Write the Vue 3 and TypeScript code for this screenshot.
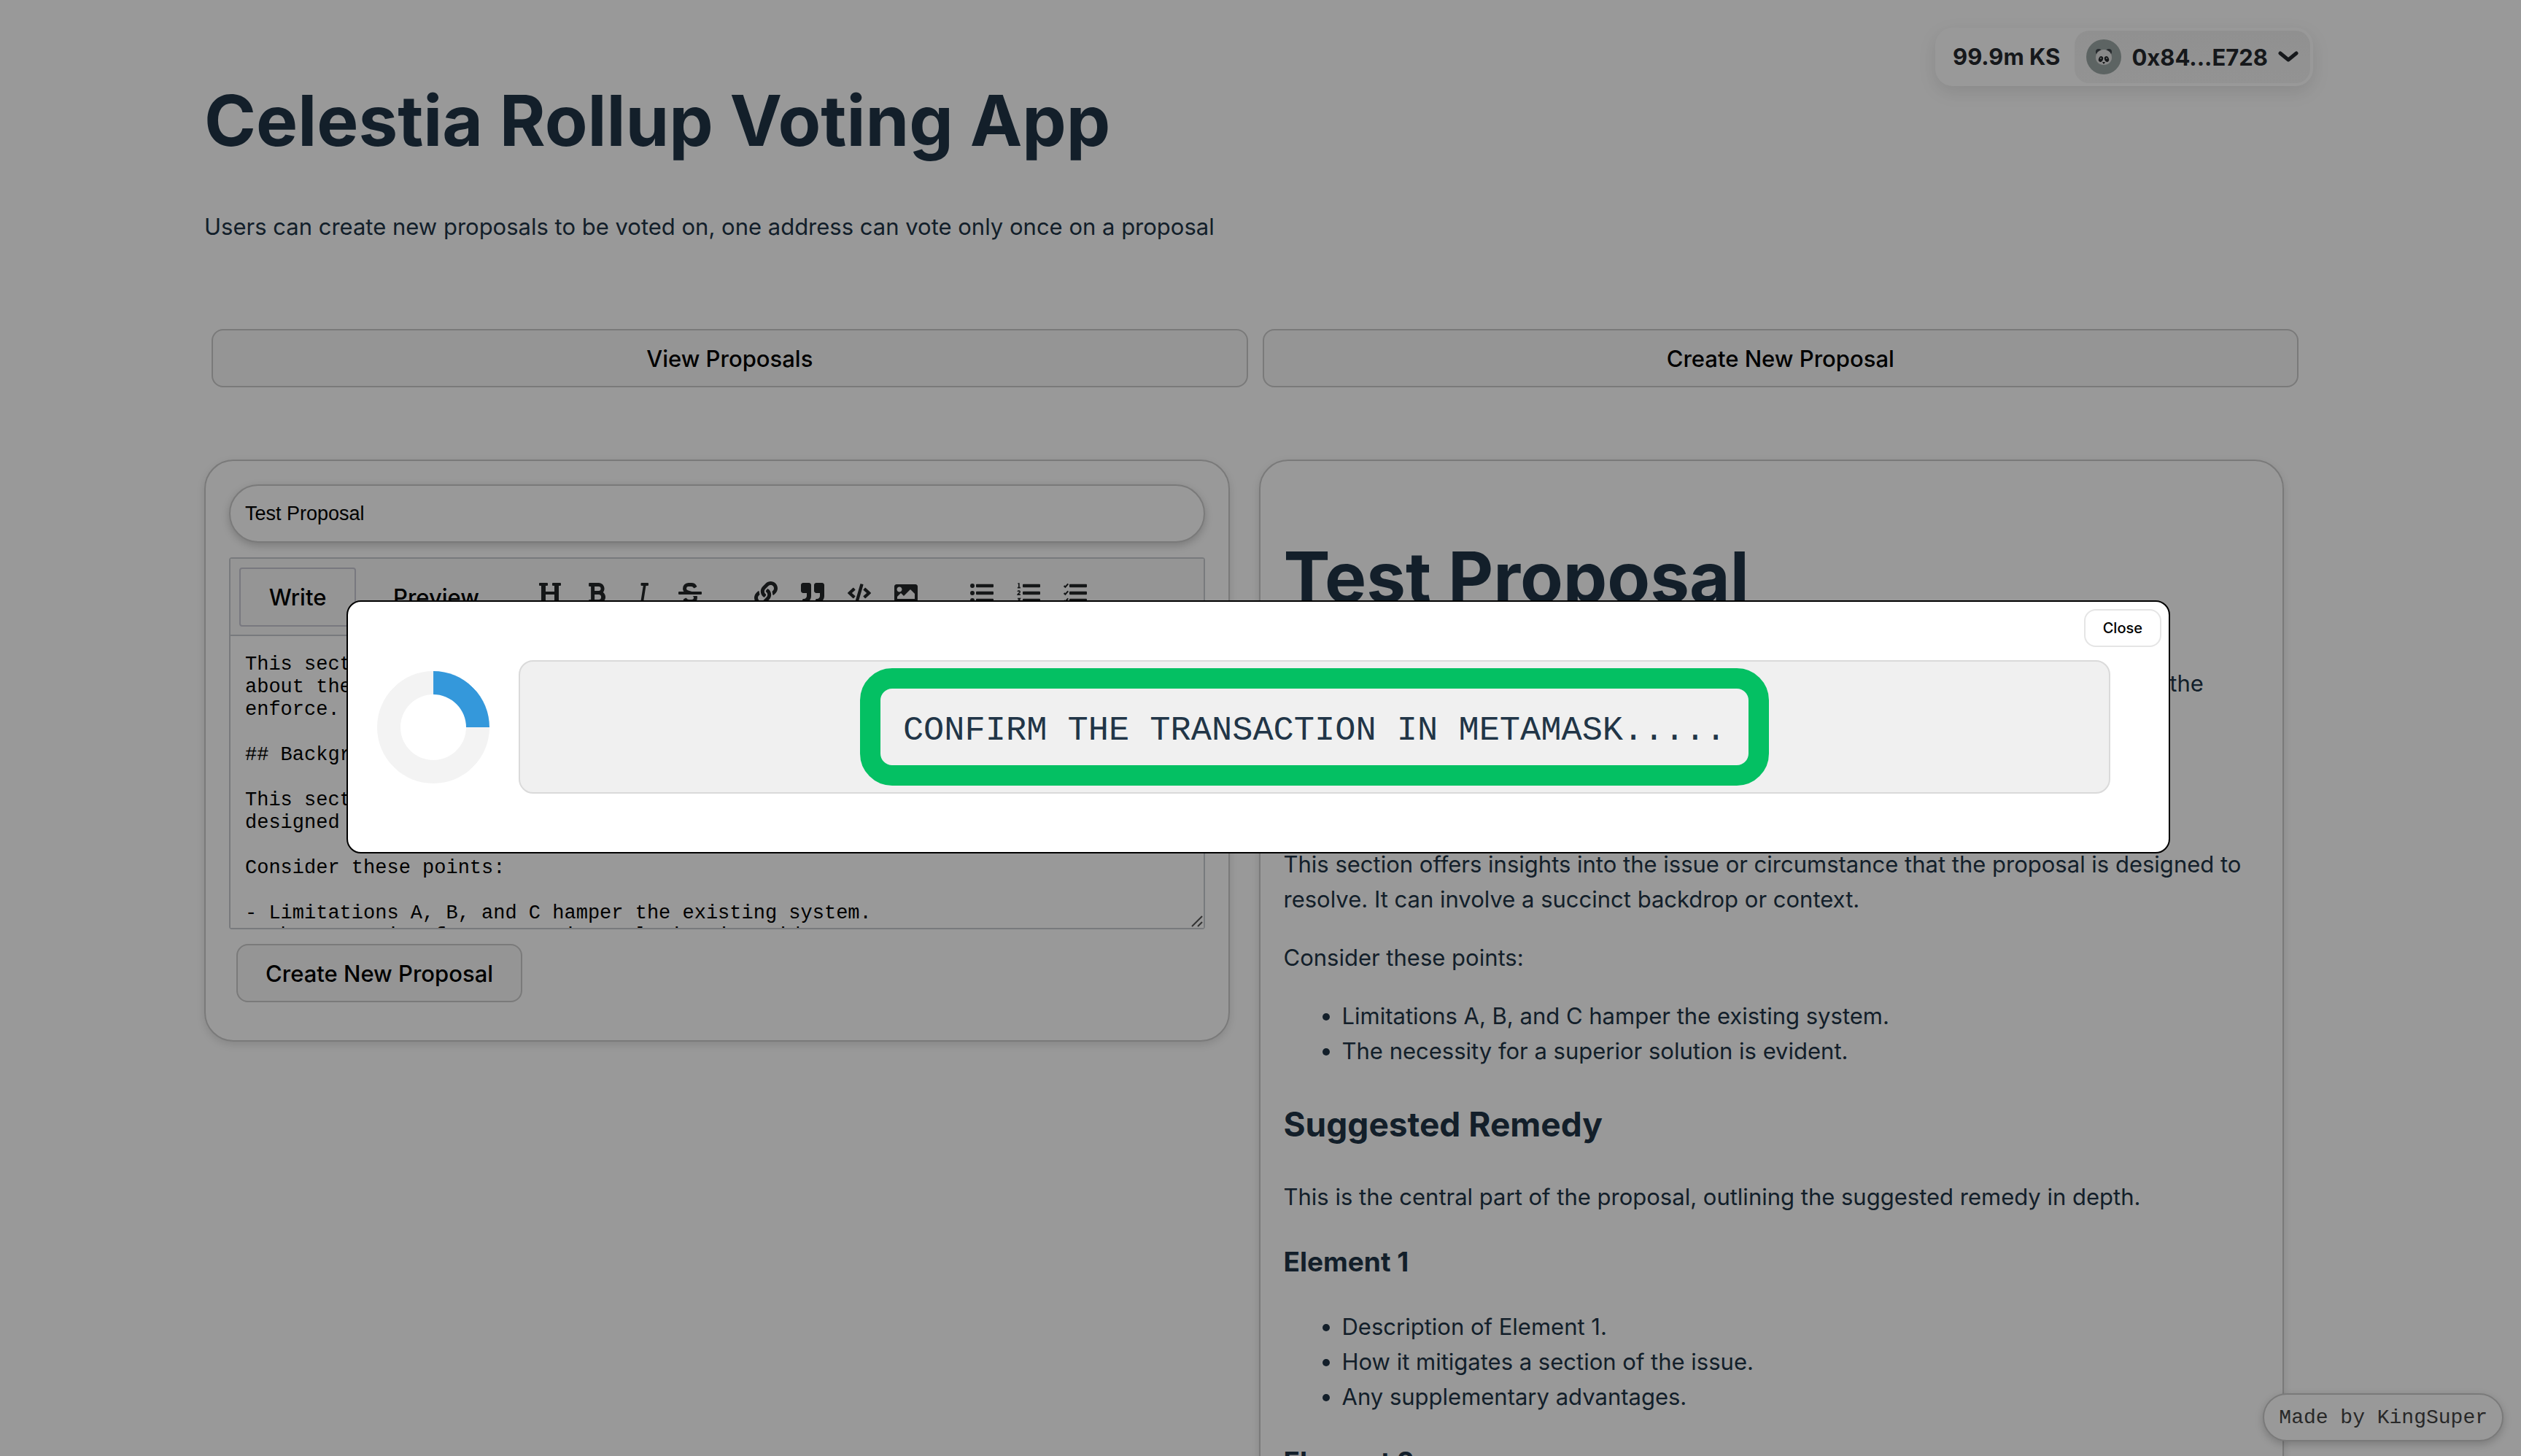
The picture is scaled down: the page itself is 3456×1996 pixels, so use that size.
<script setup lang="ts">
import { ref } from 'vue'

interface Tool {
  label: string
  viewBox: string
  path: string
  digits?: string
  ticks?: string
}

const box = '0 0 512 512'
const bars =
  'M144 132h352a16 16 0 0 0 16-16V76a16 16 0 0 0-16-16H144a16 16 0 0 0-16 16v40a16 16 0 0 0 16 16zm0 160h352a16 16 0 0 0 16-16v-40a16 16 0 0 0-16-16H144a16 16 0 0 0-16 16v40a16 16 0 0 0 16 16zm0 160h352a16 16 0 0 0 16-16v-40a16 16 0 0 0-16-16H144a16 16 0 0 0-16 16v40a16 16 0 0 0 16 16z'

const toolGroups: Tool[][] = [
  [
    {
      label: 'Add header',
      viewBox: box,
      path: 'M448 96v320h32a16 16 0 0 1 16 16v32a16 16 0 0 1-16 16H320a16 16 0 0 1-16-16v-32a16 16 0 0 1 16-16h32V288H160v128h32a16 16 0 0 1 16 16v32a16 16 0 0 1-16 16H32a16 16 0 0 1-16-16v-32a16 16 0 0 1 16-16h32V96H32a16 16 0 0 1-16-16V48a16 16 0 0 1 16-16h160a16 16 0 0 1 16 16v32a16 16 0 0 1-16 16h-32v128h192V96h-32a16 16 0 0 1-16-16V48a16 16 0 0 1 16-16h160a16 16 0 0 1 16 16v32a16 16 0 0 1-16 16z',
    },
    {
      label: 'Add bold text',
      viewBox: '0 0 384 512',
      path: 'M333.49 238a122 122 0 0 0 27-65.21C367.87 96.49 308 32 233.42 32H34a16 16 0 0 0-16 16v48a16 16 0 0 0 16 16h31.87v288H34a16 16 0 0 0-16 16v48a16 16 0 0 0 16 16h209.32c70.8 0 134.14-51.75 141-122.4 4.74-48.45-16.39-92.06-50.83-119.6zM145.66 112h87.76a48 48 0 0 1 0 96h-87.76zm87.76 288h-87.76V288h87.76a56 56 0 0 1 0 112z',
    },
    {
      label: 'Add italic text',
      viewBox: '0 0 320 512',
      path: 'M272 48v32a16 16 0 0 1-16 16h-40l-50 320h34a16 16 0 0 1 16 16v32a16 16 0 0 1-16 16H64a16 16 0 0 1-16-16v-32a16 16 0 0 1 16-16h42l50-320h-36a16 16 0 0 1-16-16V48a16 16 0 0 1 16-16h136a16 16 0 0 1 16 16z',
    },
    {
      label: 'Add strikethrough text',
      viewBox: box,
      path: 'M496 224H293.9l-87.17-26.83A43.55 43.55 0 0 1 219.55 112h66.79A49.89 49.89 0 0 1 331 139.58a16 16 0 0 0 21.46 7.15l42.94-21.47a16 16 0 0 0 7.16-21.46l-.53-1A128 128 0 0 0 287.51 32h-68a123.68 123.68 0 0 0-123 135.64c2 20.89 10.1 39.83 21.78 56.36H16a16 16 0 0 0-16 16v32a16 16 0 0 0 16 16h480a16 16 0 0 0 16-16v-32a16 16 0 0 0-16-16zm-180.24 96A43 43 0 0 1 336 356.45 43.59 43.59 0 0 1 292.45 400h-66.79A49.89 49.89 0 0 1 181 372.42a16 16 0 0 0-21.46-7.15l-42.94 21.47a16 16 0 0 0-7.16 21.46l.53 1A128 128 0 0 0 224.49 480h68a123.68 123.68 0 0 0 123-135.64 114.25 114.25 0 0 0-5.34-24.36z',
    },
  ],
  [
    {
      label: 'Add a link',
      viewBox: box,
      path: 'M326.612 185.391c59.747 59.809 58.927 155.698.36 214.59-.11.12-.24.25-.36.37l-67.2 67.2c-59.27 59.27-155.699 59.262-214.96 0-59.27-59.26-59.27-155.7 0-214.96l37.106-37.106c9.84-9.84 26.786-3.3 27.294 10.606.648 17.722 3.826 35.527 9.69 52.721 1.986 5.822.567 12.262-3.783 16.612l-13.087 13.087c-28.026 28.026-28.905 73.66-1.155 101.96 28.024 28.579 74.086 28.749 102.325.51l67.2-67.19c28.191-28.191 28.073-73.757 0-101.83-3.701-3.694-7.429-6.564-10.341-8.569a16.037 16.037 0 0 1-6.947-12.606c-.396-10.567 3.348-21.456 11.698-29.806l21.054-21.055c5.521-5.521 14.182-6.199 20.584-1.731a152.482 152.482 0 0 1 20.522 17.197zM467.547 44.449c-59.261-59.262-155.69-59.27-214.96 0l-67.2 67.2c-.12.12-.25.25-.36.37-58.566 58.892-59.387 154.781.36 214.59a152.454 152.454 0 0 0 20.521 17.196c6.402 4.468 15.064 3.789 20.584-1.731l21.054-21.055c8.35-8.35 12.094-19.239 11.698-29.806a16.037 16.037 0 0 0-6.947-12.606c-2.912-2.005-6.64-4.875-10.341-8.569-28.073-28.073-28.191-73.639 0-101.83l67.2-67.19c28.239-28.239 74.3-28.069 102.325.51 27.75 28.3 26.872 73.934-1.155 101.96l-13.087 13.087c-4.35 4.35-5.769 10.79-3.783 16.612 5.864 17.194 9.042 34.999 9.69 52.721.509 13.906 17.454 20.446 27.294 10.606l37.106-37.106c59.271-59.259 59.271-155.699.001-214.959z',
    },
    {
      label: 'Insert a quote',
      viewBox: box,
      path: 'M464 32H336c-26.5 0-48 21.5-48 48v128c0 26.5 21.5 48 48 48h80v64c0 35.3-28.7 64-64 64h-8c-13.3 0-24 10.7-24 24v48c0 13.3 10.7 24 24 24h8c88.4 0 160-71.6 160-160V80c0-26.5-21.5-48-48-48zm-288 0H48C21.5 32 0 53.5 0 80v128c0 26.5 21.5 48 48 48h80v64c0 35.3-28.7 64-64 64h-8c-13.3 0-24 10.7-24 24v48c0 13.3 10.7 24 24 24h8c88.4 0 160-71.6 160-160V80c0-26.5-21.5-48-48-48z',
    },
    {
      label: 'Insert code',
      viewBox: '0 0 640 512',
      path: 'M278.9 511.5l-61-17.7c-6.4-1.8-10-8.5-8.2-14.9L346.2 8.7c1.8-6.4 8.5-10 14.9-8.2l61 17.7c6.4 1.8 10 8.5 8.2 14.9L293.8 503.3c-1.9 6.4-8.5 10.1-14.9 8.2zm-114-112.2l43.5-46.4c4.6-4.9 4.3-12.7-.8-17.2L117 256l90.6-79.7c5.1-4.5 5.5-12.3.8-17.2l-43.5-46.4c-4.5-4.8-12.1-5.1-17-.5L3.8 247.2c-5.1 4.7-5.1 12.8 0 17.5l144.1 135.1c4.9 4.6 12.5 4.4 17-.5zm327.2.6l144.1-135.1c5.1-4.7 5.1-12.8 0-17.5L492.1 112.1c-4.8-4.5-12.4-4.3-17 .5L431.6 159c-4.6 4.9-4.3 12.7.8 17.2L523 256l-90.6 79.7c-5.1 4.5-5.5 12.3-.8 17.2l43.5 46.4c4.5 4.9 12.1 5.1 17 .6z',
    },
    {
      label: 'Add image',
      viewBox: box,
      path: 'M464 448H48c-26.51 0-48-21.49-48-48V112c0-26.51 21.49-48 48-48h416c26.51 0 48 21.49 48 48v288c0 26.51-21.49 48-48 48zM112 120c-30.928 0-56 25.072-56 56s25.072 56 56 56 56-25.072 56-56-25.072-56-56-56zM64 384h384V272l-87.515-87.515c-4.686-4.686-12.284-4.686-16.971 0L208 320l-55.515-55.515c-4.686-4.686-12.284-4.686-16.971 0L64 336v48z',
    },
  ],
  [
    {
      label: 'Unordered list',
      viewBox: box,
      path: bars + 'M48 48a44 44 0 1 0 0 96 44 44 0 1 0 0-96zm0 160a44 44 0 1 0 0 96 44 44 0 1 0 0-96zm0 160a44 44 0 1 0 0 96 44 44 0 1 0 0-96z',
    },
    {
      label: 'Ordered list',
      viewBox: box,
      path: bars,
      digits: 'M22 48h24v84M14 138h64M16 222c14-22 58-14 50 14-6 18-36 30-46 54h58M18 378h50l-26 34c44-2 40 50 2 50-14 0-24-6-28-14',
    },
    {
      label: 'Checklist',
      viewBox: box,
      path: bars,
      ticks: 'M10 96l28 28 62-70M10 256l28 28 62-70M10 416l28 28 62-70',
    },
  ],
]

const title = ref('Test Proposal')
const draft = ref(`This section gives a concise summary of the proposal and could tell readers
about the modifications it includes and the measures that it aims to
enforce.

## Background

This section offers insights into the issue or circumstance that it is
designed to resolve.

Consider these points:

- Limitations A, B, and C hamper the existing system.
- The necessity for a superior solution is evident.
`)
const points = ['Limitations A, B, and C hamper the existing system.', 'The necessity for a superior solution is evident.']
const elementPoints = ['Description of Element 1.', 'How it mitigates a section of the issue.', 'Any supplementary advantages.']
const pending = ref(true)
</script>

<template>
  <div class="page">
    <header class="header">
      <h1>Celestia Rollup Voting App</h1>
      <div class="wallet">
        <span class="balance">99.9m KS</span>
        <button class="account" type="button">
          <svg class="avatar" viewBox="0 0 48 48" aria-hidden="true">
            <circle cx="24" cy="24" r="24" fill="#9ba7a5" />
            <circle cx="17" cy="17" r="4" fill="#40464b" />
            <circle cx="31" cy="17" r="4" fill="#40464b" />
            <path d="M24 14c7 0 11 5 11 11 0 6-5 10-11 10s-11-4-11-10c0-6 4-11 11-11z" fill="#e4e4e4" />
            <ellipse cx="20" cy="27" rx="3" ry="4" fill="#26292c" transform="rotate(20 20 27)" />
            <ellipse cx="28" cy="27" rx="3" ry="4" fill="#26292c" transform="rotate(-20 28 27)" />
            <circle cx="20" cy="26" r="1" fill="#b5b5b5" />
            <circle cx="28" cy="26" r="1" fill="#b5b5b5" />
            <path d="M22 31h4l-2 3z" fill="#26292c" />
          </svg>
          <span>0x84...E728</span>
          <svg class="chevron" viewBox="0 0 28 16" aria-hidden="true">
            <path d="M3 3l11 9L25 3" fill="none" stroke="currentColor" stroke-width="5" stroke-linecap="round" stroke-linejoin="round" />
          </svg>
        </button>
      </div>
    </header>

    <main class="content">
      <p class="lead">Users can create new proposals to be voted on, one address can vote only once on a proposal</p>

      <nav class="switcher">
        <button class="btn" type="button">View Proposals</button>
        <button class="btn" type="button">Create New Proposal</button>
      </nav>

      <div class="columns">
        <form class="card" @submit.prevent>
          <input v-model="title" class="title-input" type="text" aria-label="Proposal title" />
          <div class="editor">
            <div class="toolbar">
              <button class="tab selected" type="button">Write</button>
              <button class="tab" type="button">Preview</button>
              <div v-for="(group, g) in toolGroups" :key="g" class="tools">
                <button v-for="tool in group" :key="tool.label" class="tool" type="button" :aria-label="tool.label">
                  <svg :viewBox="tool.viewBox" aria-hidden="true">
                    <path :d="tool.path" fill="currentColor" />
                    <path v-if="tool.digits" :d="tool.digits" fill="none" stroke="currentColor" stroke-width="26" />
                    <path v-if="tool.ticks" :d="tool.ticks" fill="none" stroke="currentColor" stroke-width="34" />
                  </svg>
                </button>
              </div>
            </div>
            <div class="field">
              <textarea v-model="draft" class="draft" aria-label="Proposal text" spellcheck="false"></textarea>
              <svg class="grip" viewBox="0 0 18 18" aria-hidden="true">
                <path d="M2 16L16 2M10 16l6-6" stroke="#555" stroke-width="2" />
              </svg>
            </div>
          </div>
          <button class="btn submit" type="submit">Create New Proposal</button>
        </form>

        <article class="card rendered">
          <h1>{{ title }}</h1>
          <p>
            This section gives a concise summary of the proposal and could tell readers about the
            modifications it includes and the measures that it aims to enforce.
          </p>
          <h2>Background</h2>
          <p>
            This section offers insights into the issue or circumstance that the proposal is designed to resolve. It can
            involve a succinct backdrop or context.
          </p>
          <p>Consider these points:</p>
          <ul>
            <li v-for="point in points" :key="point">{{ point }}</li>
          </ul>
          <h2>Suggested Remedy</h2>
          <p>This is the central part of the proposal, outlining the suggested remedy in depth.</p>
          <h3>Element 1</h3>
          <ul>
            <li v-for="point in elementPoints" :key="point">{{ point }}</li>
          </ul>
          <h3>Element 2</h3>
        </article>
      </div>
    </main>

    <a class="credit" href="#">Made by KingSuper</a>

    <div v-if="pending" class="overlay">
      <div class="modal" role="dialog" aria-label="Transaction status">
        <button class="close" type="button" @click="pending = false">Close</button>
        <div class="spinner"></div>
        <div class="status">
          <div class="message">CONFIRM THE TRANSACTION IN METAMASK.....</div>
        </div>
      </div>
    </div>
  </div>
</template>

<style>
body {
  margin: 0;
  background: #fff;
}
</style>

<style scoped>
.page,
.page * {
  box-sizing: border-box;
}

.page {
  position: relative;
  height: 100vh;
  overflow: hidden;
  color: #213547;
  background: #fff;
  font: 400 31px/48px Inter, 'Noto Sans', sans-serif;
}

button {
  margin: 0;
  font-family: inherit;
  cursor: pointer;
}

h1 {
  margin: 68px 0 63px;
  font-size: 96px;
  font-weight: 700;
  line-height: 118px;
}

h2 {
  margin: 40px 0;
  font-size: 46px;
  font-weight: 700;
  line-height: 72px;
}

h3 {
  margin: 37px 0;
  font-size: 37px;
  font-weight: 700;
  line-height: 56px;
}

p {
  margin: 32px 0;
}

ul {
  margin: 32px 0;
  padding-left: 80px;
}

.header {
  display: flex;
  justify-content: space-between;
  align-items: flex-start;
  padding: 38px 285px 0 280px;
}

.wallet {
  display: flex;
  align-items: center;
  height: 80px;
  padding: 4px;
  border-radius: 24px;
  background: #fff;
  box-shadow: 0 8px 24px rgba(0, 0, 0, 0.1);
  color: #25292e;
  font-weight: 700;
}

.balance {
  padding: 0 20px;
}

.account {
  display: flex;
  align-items: center;
  gap: 14px;
  height: 72px;
  padding: 0 16px;
  border: 0;
  border-radius: 20px;
  background: linear-gradient(#f1f1f1, #f5f5f5);
  color: #25292e;
  font-size: 31px;
  font-weight: 700;
}

.avatar {
  width: 48px;
  height: 48px;
}

.chevron {
  width: 28px;
  height: 16px;
}

.content {
  padding: 0 295px 0 280px;
}

.lead {
  margin: 0 0 116px;
}

.switcher {
  display: flex;
  gap: 20px;
  margin-bottom: 99px;
  padding: 0 10px;
}

.btn {
  height: 80px;
  padding: 0 38px;
  border: 2px solid #cbcbcb;
  border-radius: 16px;
  background: #f9f9f9;
  color: #000;
  font-size: 31px;
  font-weight: 500;
}

.switcher .btn {
  flex: 1;
}

.columns {
  display: flex;
  align-items: flex-start;
  gap: 40px;
  padding-right: 30px;
}

.card {
  flex: 1 1 0;
  min-width: 0;
  padding: 32px;
  border: 2px solid #ccc;
  border-radius: 40px;
  background: #fff;
  box-shadow: 0 4px 12px rgba(0, 0, 0, 0.12);
}

.title-input {
  display: block;
  width: 100%;
  height: 80px;
  margin-bottom: 20px;
  padding: 0 20px;
  border: 2px solid #ccc;
  border-radius: 40px;
  background: #fff;
  box-shadow: 0 4px 12px rgba(0, 0, 0, 0.2);
  color: #000;
  font: 27px 'Liberation Sans', Arial, sans-serif;
}

.editor {
  border: 2px solid #c8ccd0;
  border-radius: 4px;
}

.toolbar {
  display: flex;
  align-items: flex-start;
  padding: 12px 12px 11px;
  border-bottom: 2px solid #c8ccd0;
  background: #f9f9f9;
}

.tab {
  width: 160px;
  height: 81px;
  margin-right: 6px;
  padding: 0;
  border: 2px solid transparent;
  border-radius: 4px;
  background: transparent;
  color: #000;
  font-size: 31px;
  font-weight: 500;
}

.tab + .tab {
  width: 208px;
}

.tab.selected {
  border-color: #c8c8d4;
}

.tools {
  display: flex;
  padding: 19px 0 0 14px;
}

.tools + .tools {
  padding-left: 40px;
}

.tool {
  display: flex;
  justify-content: center;
  width: 64px;
  padding: 0;
  border: 0;
  background: none;
  color: #242729;
}

.tool svg {
  width: 32px;
  height: 32px;
}

.field {
  position: relative;
  height: 400px;
}

.draft {
  display: block;
  width: 100%;
  height: 100%;
  padding: 24px 20px 0;
  border: 0;
  outline: 0;
  overflow: hidden;
  resize: none;
  background: #fff;
  color: #000;
  font: 27px/31px 'Liberation Mono', 'Courier New', monospace;
}

.grip {
  position: absolute;
  right: 0;
  bottom: 0;
  width: 18px;
  height: 18px;
}

.submit {
  margin: 20px 10px;
}

.rendered ul + h2 {
  margin-top: 40px;
}

h3 + ul {
  margin-top: 37px;
}

.credit {
  position: absolute;
  right: 24px;
  bottom: 20px;
  padding: 1px 20px 0;
  border: 2px solid #ccc;
  border-radius: 33px;
  background: #fff;
  box-shadow: 0 4px 12px rgba(0, 0, 0, 0.2);
  color: #444;
  font: 28px/61px 'Liberation Mono', 'Courier New', monospace;
  text-decoration: none;
}

.overlay {
  position: fixed;
  inset: 0;
  display: flex;
  align-items: center;
  justify-content: center;
  padding: 0 6px 3px 0;
  background: rgba(0, 0, 0, 0.4);
}

.modal {
  position: relative;
  display: flex;
  align-items: center;
  gap: 40px;
  width: 90%;
  max-width: 2500px;
  padding: 80px 80px 80px 40px;
  border: 2px solid #000;
  border-radius: 20px;
  background: #fff;
}

.close {
  position: absolute;
  top: 10px;
  right: 10px;
  height: 52px;
  padding: 0 24px;
  border: 2px solid #e5e5e5;
  border-radius: 16px;
  background: #fff;
  color: #000;
  font-size: 20px;
  font-weight: 500;
}

.spinner {
  flex: none;
  width: 154px;
  height: 154px;
  border: 32px solid #f3f3f3;
  border-top-color: #3498db;
  border-radius: 50%;
  transform: rotate(45deg);
}

.status {
  display: flex;
  flex: 1;
  justify-content: center;
  padding: 9px;
  border: 2px solid #dadada;
  border-radius: 20px;
  background: #f0f0f0;
}

.message {
  padding: 30px 31px 20px;
  border: 28px solid #04c063;
  border-radius: 44px;
  font: 47px/55px 'Liberation Mono', 'Courier New', monospace;
}
</style>
